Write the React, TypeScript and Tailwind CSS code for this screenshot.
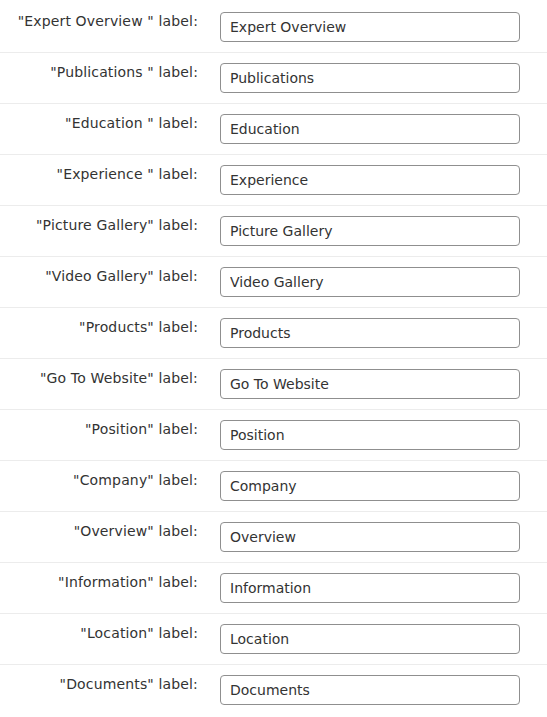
const labels = [
  ["\"Expert Overview \" label:", "Expert Overview"],
  ["\"Publications \" label:", "Publications"],
  ["\"Education \" label:", "Education"],
  ["\"Experience \" label:", "Experience"],
  ["\"Picture Gallery\" label:", "Picture Gallery"],
  ["\"Video Gallery\" label:", "Video Gallery"],
  ["\"Products\" label:", "Products"],
  ["\"Go To Website\" label:", "Go To Website"],
  ["\"Position\" label:", "Position"],
  ["\"Company\" label:", "Company"],
  ["\"Overview\" label:", "Overview"],
  ["\"Information\" label:", "Information"],
  ["\"Location\" label:", "Location"],
  ["\"Documents\" label:", "Documents"],
];

export default function App() {
  return (
    <main
      className="min-h-screen bg-white pt-[2px] text-[14px] text-[#333]"
      style={{ fontFamily: '"DejaVu Sans", Verdana, sans-serif' }}
    >
      {labels.map(([label, value], i) => (
        <div
          key={i}
          className="flex items-start py-[10px] border-b border-[#ececec] last:border-b-0"
        >
          <label className="w-[198px] shrink-0 text-right leading-[18px] tracking-[0.15px]">
            {label}
          </label>
          <input
            readOnly
            defaultValue={value}
            className="ml-[22px] h-[30px] w-[300px] rounded-[4px] border border-[#8f8f8f] px-[9px] text-[14px] text-[#333] outline-none"
          />
        </div>
      ))}
    </main>
  );
}
